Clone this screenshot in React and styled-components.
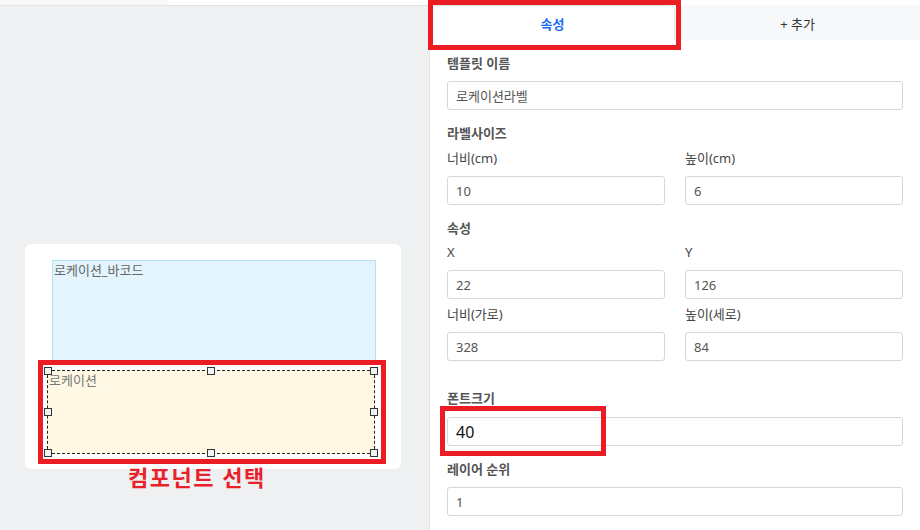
import React from "react";
import styled, { createGlobalStyle } from "styled-components";

const Global = createGlobalStyle`
  html, body { margin: 0; padding: 0; }
  body {
    width: 920px; height: 530px; overflow: hidden;
    font-family: "Noto Sans", "Noto Sans CJK KR", sans-serif;
    background: #eff0f2;
  }
  * { box-sizing: border-box; }
`;

const Page = styled.div`
  display: flex;
  width: 920px;
  height: 530px;
`;

const CanvasArea = styled.div`
  position: relative;
  width: 429px;
  display: flex;
  flex-direction: column;
  background: #eff0f2;
`;

const TopStrip = styled.div`
  height: 6px;
  background: linear-gradient(to right, #f8f8f8 0 168px, #ffffff 168px);
  border-bottom: 1px solid #e2e3e6;
`;

const CanvasBody = styled.div`
  flex: 1;
  display: flex;
  justify-content: center;
  padding-top: 238px;
`;

const LabelCard = styled.div`
  position: relative;
  width: 376px;
  height: 225px;
  background: #ffffff;
  border-radius: 6px;
  margin-left: -3px;
`;

const Element = styled.div`
  position: absolute;
  font-size: 13px;
  line-height: 16px;
  padding: 1px 1px;
  color: ${(p) => p.$color};
  background: ${(p) => p.$bg};
  border: 1px ${(p) => (p.$selected ? "dashed #222" : "solid " + p.$border)};
`;

const Handle = styled.span`
  position: absolute;
  width: 8px;
  height: 8px;
  background: #f2f2f2;
  border: 1.5px solid #333;
  transform: translate(-50%, -50%);
`;

const RedBox = styled.div`
  position: absolute;
  border: 5px solid #ec1c24;
  pointer-events: none;
  z-index: 5;
`;

const Caption = styled.div`
  position: absolute;
  left: 128px;
  top: 462px;
  color: #e8212b;
  font-weight: 700;
  font-size: 22px;
  letter-spacing: 1.5px;
  line-height: 30px;
`;

const Panel = styled.div`
  position: relative;
  width: 491px;
  background: #ffffff;
  border-left: 1px solid #e3e5e8;
  display: flex;
  flex-direction: column;
`;

const PanelTop = styled.div`
  height: 5px;
  background: #ffffff;
`;

const Tabs = styled.div`
  display: grid;
  grid-template-columns: 1fr 1fr;
  height: 35px;
  background: #f7f8fa;
`;

const Tab = styled.div`
  display: flex;
  align-items: center;
  justify-content: center;
  font-size: 13px;
  font-weight: ${(p) => (p.$active ? 700 : 400)};
  color: ${(p) => (p.$active ? "#1668f5" : "#333")};
  background: ${(p) => (p.$active ? "#ffffff" : "transparent")};
  border: ${(p) => (p.$active ? "1px solid #e4e6ea" : "none")};
  border-bottom: none;
  border-radius: 5px 5px 0 0;
  padding-top: 1px;
`;

const Form = styled.div`
  padding: 13px 17px 0 17px;
  display: flex;
  flex-direction: column;
`;

const Heading = styled.div`
  font-size: 13px;
  font-weight: 700;
  color: #555;
  line-height: 20px;
  margin-top: ${(p) => p.$mt || 0}px;
`;

const SubLabel = styled.div`
  font-size: 13px;
  color: #444;
  line-height: 20px;
`;

const Row = styled.div`
  display: grid;
  grid-template-columns: 1fr 1fr;
  column-gap: 20px;
  margin-top: ${(p) => p.$mt || 0}px;
`;

const Field = styled.div`
  display: flex;
  flex-direction: column;
  gap: ${(p) => p.$gap ?? 8}px;
`;

const Input = styled.div`
  height: 29px;
  border: 1px solid #d3d7de;
  border-radius: 3px;
  padding: 0 8px;
  display: flex;
  align-items: center;
  font-size: ${(p) => (p.$big ? 16 : 13)}px;
  color: ${(p) => (p.$big ? "#111" : "#555")};
  margin-top: ${(p) => p.$mt || 0}px;
`;

const handles = [
  [0, 0], [50, 0], [100, 0],
  [0, 50], [100, 50],
  [0, 100], [50, 100], [100, 100],
];

export default function App() {
  return (
    <>
      <Global />
      <Page>
        <CanvasArea>
          <TopStrip />
          <CanvasBody>
            <LabelCard>
              <Element
                style={{ left: 27, top: 16, width: 324, height: 104 }}
                $bg="#e3f4fd"
                $border="#b6e0f8"
                $color="#666"
              >
                로케이션_바코드
              </Element>
              <Element
                style={{ left: 22, top: 126, width: 328, height: 84 }}
                $bg="#fef8e5"
                $selected
                $color="#777"
              >
                로케이션
                {handles.map(([x, y], i) => (
                  <Handle key={i} style={{ left: `${x}%`, top: `${y}%` }} />
                ))}
              </Element>
            </LabelCard>
          </CanvasBody>
          <RedBox style={{ left: 38, top: 360, width: 348, height: 104 }} />
          <Caption>컴포넌트 선택</Caption>
        </CanvasArea>

        <Panel>
          <PanelTop />
          <Tabs>
            <Tab $active>속성</Tab>
            <Tab>+ 추가</Tab>
          </Tabs>
          <Form>
            <Field>
              <Heading>템플릿 이름</Heading>
              <Input>로케이션라벨</Input>
            </Field>

            <Heading $mt={13}>라벨사이즈</Heading>
            <Row $mt={5}>
              <Field>
                <SubLabel>너비(cm)</SubLabel>
                <Input>10</Input>
              </Field>
              <Field>
                <SubLabel>높이(cm)</SubLabel>
                <Input>6</Input>
              </Field>
            </Row>

            <Heading $mt={13}>속성</Heading>
            <Row $mt={4}>
              <Field>
                <SubLabel>X</SubLabel>
                <Input>22</Input>
              </Field>
              <Field>
                <SubLabel>Y</SubLabel>
                <Input>126</Input>
              </Field>
            </Row>
            <Row $mt={5}>
              <Field>
                <SubLabel>너비(가로)</SubLabel>
                <Input>328</Input>
              </Field>
              <Field>
                <SubLabel>높이(세로)</SubLabel>
                <Input>84</Input>
              </Field>
            </Row>

            <Heading $mt={27}>폰트크기</Heading>
            <Input $big $mt={9}>40</Input>

            <Heading $mt={13}>레이어 순위</Heading>
            <Input $mt={8}>1</Input>
          </Form>
          <RedBox style={{ left: -2, top: 0, width: 253, height: 50 }} />
          <RedBox style={{ left: 10, top: 406, width: 166, height: 50 }} />
        </Panel>
      </Page>
    </>
  );
}
